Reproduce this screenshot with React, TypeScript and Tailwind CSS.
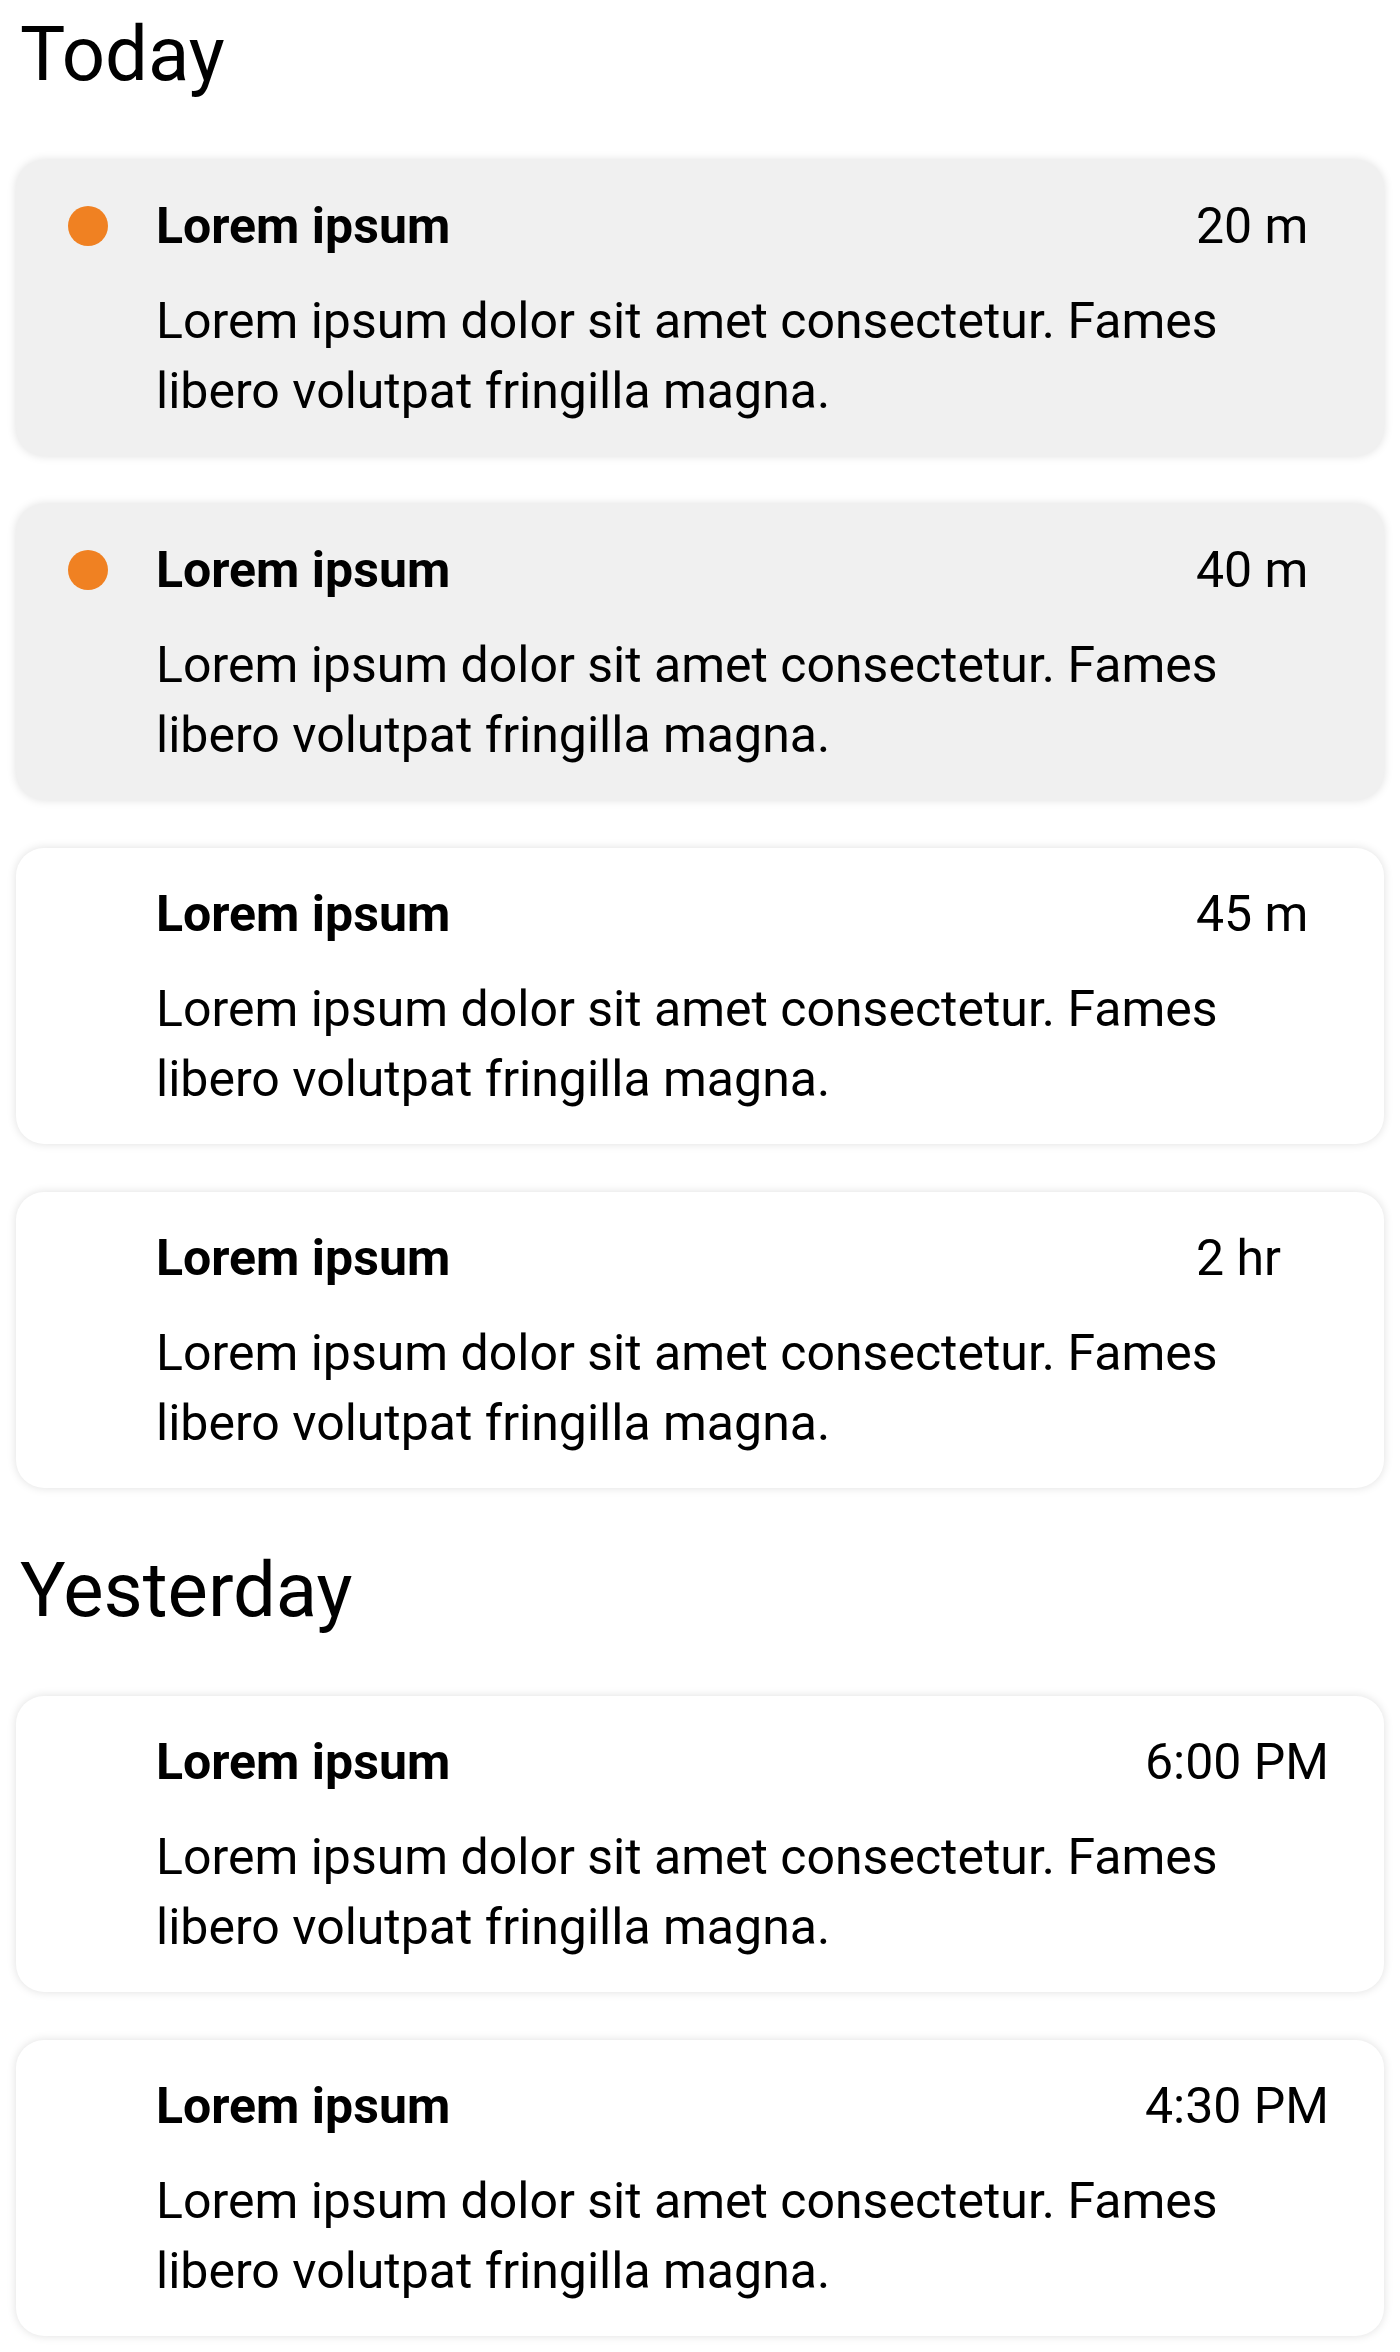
import React from 'react';

type Note = {
  title: string;
  body: string;
  time: string;
  unread?: boolean;
  timeW: string;
};

const today: Note[] = [
  { title: 'Lorem ipsum', body: 'Lorem ipsum dolor sit amet consectetur. Fames libero volutpat fringilla magna.', time: '20 m', unread: true, timeW: 'w-[145px]' },
  { title: 'Lorem ipsum', body: 'Lorem ipsum dolor sit amet consectetur. Fames libero volutpat fringilla magna.', time: '40 m', unread: true, timeW: 'w-[145px]' },
  { title: 'Lorem ipsum', body: 'Lorem ipsum dolor sit amet consectetur. Fames libero volutpat fringilla magna.', time: '45 m', timeW: 'w-[145px]' },
  { title: 'Lorem ipsum', body: 'Lorem ipsum dolor sit amet consectetur. Fames libero volutpat fringilla magna.', time: '2 hr', timeW: 'w-[145px]' },
];

const yesterday: Note[] = [
  { title: 'Lorem ipsum', body: 'Lorem ipsum dolor sit amet consectetur. Fames libero volutpat fringilla magna.', time: '6:00 PM', timeW: 'w-[196px]' },
  { title: 'Lorem ipsum', body: 'Lorem ipsum dolor sit amet consectetur. Fames libero volutpat fringilla magna.', time: '4:30 PM', timeW: 'w-[196px]' },
];

const NoteCard = ({ note }: { note: Note }) => {
  return (
    <div
      className={`flex h-[296px] rounded-[28px] pt-[37px] pb-[30px] pr-[43px] shadow-[0_0_10px_rgba(0,0,0,0.13)] ${
        note.unread ? 'bg-[#f0f0f0]' : 'bg-white'
      }`}
    >
      <div className="w-[140px] shrink-0 pl-[52px] pt-[9px]">
        {note.unread && <div className="h-[40px] w-[40px] rounded-full bg-[#f08122]" />}
      </div>
      <div className="flex-1">
        <div className="flex items-center justify-between">
          <h3 className="text-[50px] font-bold leading-[58px] text-black">{note.title}</h3>
          <span className={`${note.timeW} text-[50px] leading-[58px] text-black`}>{note.time}</span>
        </div>
        <p className="mt-[31px] max-w-[1120px] text-[50px] leading-[70px] text-black">{note.body}</p>
      </div>
    </div>
  );
};

const Section = ({ title, notes, first }: { title: string; notes: Note[]; first?: boolean }) => {
  return (
    <section className={first ? 'pt-[14px]' : 'pt-[62px]'}>
      <h2 className="ml-[4px] mb-[66px] text-[76px] leading-[80px] text-black">{title}</h2>
      <div className="flex flex-col gap-[48px]">
        {notes.map((n, i) => (
          <NoteCard key={i} note={n} />
        ))}
      </div>
    </section>
  );
};

export default function App() {
  return (
    <div className="min-h-screen bg-white px-[16px] pb-[16px] font-['Roboto',_'Liberation_Sans',_sans-serif]">
      <Section title="Today" notes={today} first />
      <Section title="Yesterday" notes={yesterday} />
    </div>
  );
}
